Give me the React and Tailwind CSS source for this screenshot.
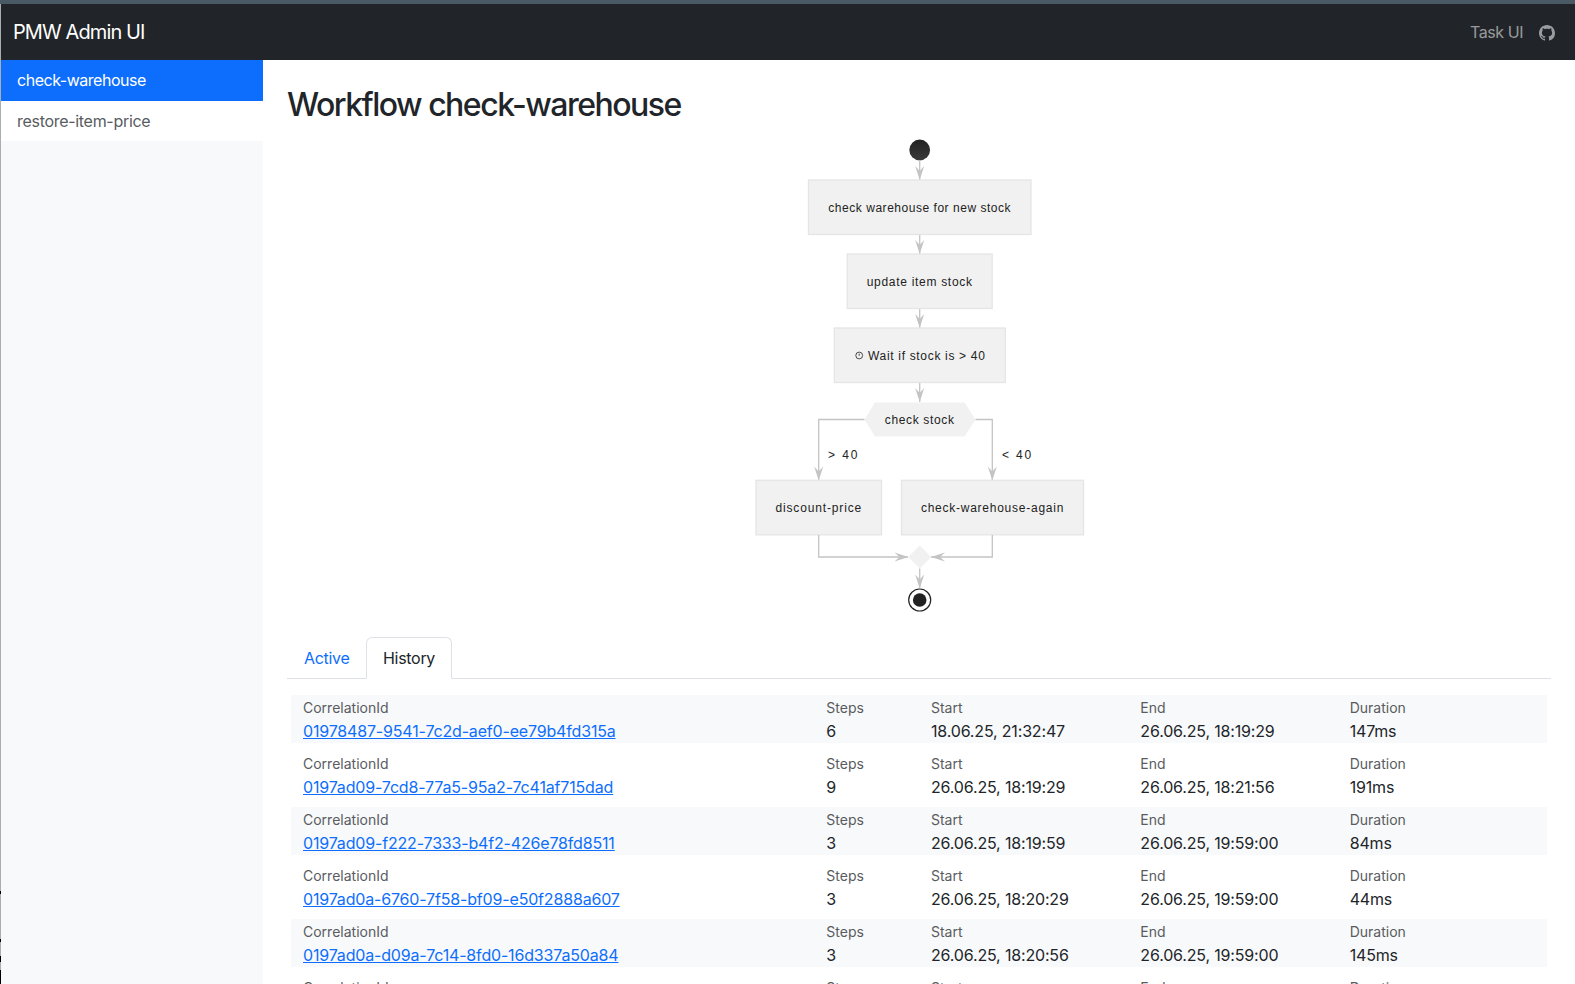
import React from "react";
import { BsGithub } from "react-icons/bs";

const rows = [
  ["01978487-9541-7c2d-aef0-ee79b4fd315a", "6", "18.06.25, 21:32:47", "26.06.25, 18:19:29", "147ms"],
  ["0197ad09-7cd8-77a5-95a2-7c41af715dad", "9", "26.06.25, 18:19:29", "26.06.25, 18:21:56", "191ms"],
  ["0197ad09-f222-7333-b4f2-426e78fd8511", "3", "26.06.25, 18:19:59", "26.06.25, 19:59:00", "84ms"],
  ["0197ad0a-6760-7f58-bf09-e50f2888a607", "3", "26.06.25, 18:20:29", "26.06.25, 19:59:00", "44ms"],
  ["0197ad0a-d09a-7c14-8fd0-16d337a50a84", "3", "26.06.25, 18:20:56", "26.06.25, 19:59:00", "145ms"],
  ["0197ad0b-3a11-7e02-9c55-2b7f1a90c3de", "3", "26.06.25, 18:21:26", "26.06.25, 19:59:00", "96ms"],
];

function Cell({ label, span, children }) {
  return (
    <div className={`${span} px-3 pt-[2px]`}>
      <div className="mb-px text-[14px] leading-[21px] text-[#595c5f]">{label}</div>
      <div className="text-[16px] leading-[24px] tracking-[-0.17px] text-[#212529]">{children}</div>
    </div>
  );
}

const FONT = "'Liberation Sans', Arial, sans-serif";

function Label({ x, y, ls = 0.72, anchor = "start", children }) {
  return (
    <text x={x} y={y} textAnchor={anchor} fontSize="12" letterSpacing={ls} fill="#222" fontFamily={FONT}>
      {children}
    </text>
  );
}

function Box({ x, y, w, h = 54.5, ls, text }) {
  return (
    <g>
      <rect x={x} y={y} width={w} height={h} fill="#f1f1f1" stroke="#e5e5e5" strokeWidth="1.3" />
      <Label x={x + w / 2} y={y + h / 2 + 4.3} ls={ls} anchor="middle">{text}</Label>
    </g>
  );
}

function Arrow({ x, y, dir = "down" }) {
  const pts = {
    down: `${x},${y} ${x - 4.5},${y - 14} ${x},${y - 9} ${x + 4.5},${y - 14}`,
    right: `${x},${y} ${x - 14},${y - 4.5} ${x - 9},${y} ${x - 14},${y + 4.5}`,
    left: `${x},${y} ${x + 14},${y - 4.5} ${x + 9},${y} ${x + 14},${y + 4.5}`,
  }[dir];
  return <polygon points={pts} fill="#c4c4c4" />;
}

function Diagram() {
  const line = { fill: "none", stroke: "#c4c4c4", strokeWidth: 1.3 };
  return (
    <svg width="340" height="480" viewBox="749 135 340 480" className="block mx-auto">
      <defs>
        <linearGradient id="startFill" x1="0" y1="0" x2="0" y2="1">
          <stop offset="0" stopColor="#222" />
          <stop offset="1" stopColor="#3a3a3a" />
        </linearGradient>
      </defs>
      <circle cx="919.7" cy="150" r="10.4" fill="url(#startFill)" />
      <path d="M919.7 160V180M919.7 234V254M919.7 308V328M919.7 382V402" {...line} />
      <Arrow x={919.7} y={180} />
      <Arrow x={919.7} y={254} />
      <Arrow x={919.7} y={328} />
      <Arrow x={919.7} y={402} />
      <Box x={808.5} y={180} w={222.5} ls={0.53} text="check warehouse for new stock" />
      <Box x={847.2} y={254} w={145} ls={0.7} text="update item stock" />
      <rect x={834.3} y={328} width={171} height={54.5} fill="#f1f1f1" stroke="#e5e5e5" strokeWidth="1.3" />
      <g stroke="#222" strokeWidth="0.8" fill="none">
        <circle cx="859.2" cy="355.5" r="3.4" />
        <path d="M859.2 353.6V355.8" />
      </g>
      <Label x={868} y={359.8} ls={0.68}>Wait if stock is &gt; 40</Label>
      <polygon points="864.5,419.5 875,402.5 964.5,402.5 975.5,419.5 964.5,436.5 875,436.5" fill="#f1f1f1" />
      <Label x={919.7} y={423.8} ls={0.65} anchor="middle">check stock</Label>
      <path d="M864.5 419.5H818.7V480M975.5 419.5H992.3V480" {...line} />
      <Arrow x={818.7} y={480.5} />
      <Arrow x={992.3} y={480.5} />
      <Label x={828} y={459.3} ls={1.9}>&gt; 40</Label>
      <Label x={1002} y={459.3} ls={1.8}>&lt; 40</Label>
      <Box x={756} y={480.3} w={125.5} ls={0.85} text="discount-price" />
      <Box x={901.5} y={480.3} w={182} ls={0.75} text="check-warehouse-again" />
      <path d="M818.7 535V557H908M992.3 535V557H931" {...line} />
      <Arrow x={908.5} y={557} dir="right" />
      <Arrow x={931} y={557} dir="left" />
      <polygon points="919.7,545.5 931.2,557 919.7,568.5 908.2,557" fill="#f1f1f1" />
      <path d="M919.7 568.5V588" {...line} />
      <Arrow x={919.7} y={588.5} />
      <circle cx="919.7" cy="600" r="11" fill="#fff" stroke="#222" strokeWidth="1.2" />
      <circle cx="919.7" cy="600" r="6.8" fill="#222" />
    </svg>
  );
}

export default function App() {
  return (
    <div className="flex h-screen flex-col overflow-hidden bg-white font-['Inter',sans-serif] text-[16px] text-[#212529]">
      <div className="h-1 shrink-0 bg-[#4a5a64]" />
      <div className="flex min-h-0 flex-1">
        <div className="relative w-px shrink-0 bg-[#a9aeb1]">
          <div className="absolute left-0 top-[887px] h-[3px] w-px bg-black" />
          <div className="absolute left-0 top-[935px] h-[3px] w-px bg-black" />
          <div className="absolute left-0 top-[952px] h-[6px] w-px bg-black" />
          <div className="absolute left-0 top-[966px] h-[14px] w-px bg-black" />
        </div>
        <div className="flex min-h-0 min-w-0 flex-1 flex-col">
          <header className="flex h-14 shrink-0 items-center justify-between bg-[#212529] pl-3 pr-5">
            <a className="text-[20px] leading-[30px] tracking-[-0.9px] text-white">PMW Admin UI</a>
            <div className="flex items-center gap-4 text-[rgba(255,255,255,0.55)]">
              <span className="leading-6 tracking-[-0.45px]">Task UI</span>
              <BsGithub size={16} className="mt-0.5" />
            </div>
          </header>
          <div className="flex min-h-0 flex-1">
            <aside className="w-[262px] shrink-0 bg-[#f8f9fa]">
              <div className="h-[41px] bg-[#0d6efd] px-4 py-2 leading-6 tracking-[-0.47px] text-white">check-warehouse</div>
              <div className="h-10 bg-white px-4 py-2 leading-6 tracking-[-0.3px] text-[#595c5f]">restore-item-price</div>
            </aside>
            <main className="min-w-0 flex-1 overflow-hidden px-6 pt-[25px]">
              <h1 className="h-[40px] text-[32px] font-medium leading-[40px] tracking-[-1.5px] text-[#212529]">Workflow check-warehouse</h1>
              <div className="mt-[10px]">
                <Diagram />
              </div>
              <nav className="mt-[22px] flex h-[42px] border-b border-[#dee2e6] pl-px">
                <a className="h-[41px] px-4 pb-2 pt-[9px] leading-6 tracking-[-0.3px] text-[#0d6efd]">Active</a>
                <a className="h-[42px] w-[86px] rounded-t-md border border-[#dee2e6] border-b-white bg-white py-2 pl-[16.5px] leading-6 tracking-[-0.3px] text-[#212529]">History</a>
              </nav>
              <div className="mt-4 flex flex-col gap-2 px-1">
                {rows.map((r, i) => (
                  <div key={r[0]} className={`grid h-12 grid-cols-12 ${i % 2 === 0 ? "bg-[#f8f9fa]" : "bg-white"}`}>
                    <Cell label="CorrelationId" span="col-span-5">
                      <a className="text-[#0d6efd] underline">{r[0]}</a>
                    </Cell>
                    <Cell label="Steps" span="col-span-1">{r[1]}</Cell>
                    <Cell label="Start" span="col-span-2">{r[2]}</Cell>
                    <Cell label="End" span="col-span-2">{r[3]}</Cell>
                    <Cell label="Duration" span="col-span-2">{r[4]}</Cell>
                  </div>
                ))}
              </div>
            </main>
          </div>
        </div>
      </div>
    </div>
  );
}
